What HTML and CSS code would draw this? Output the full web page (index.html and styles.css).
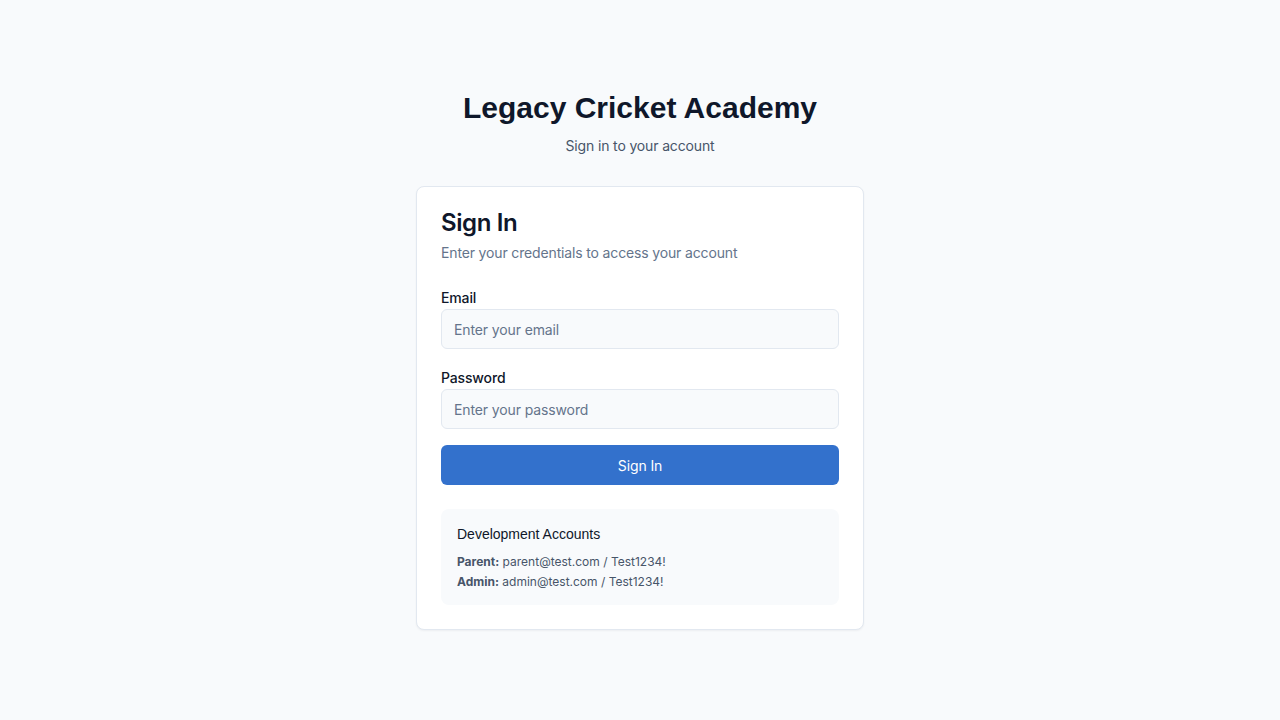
FILE: index.html
```html
<!DOCTYPE html>
<html lang="en">
<head>
<meta charset="utf-8">
<title>Legacy Cricket Academy - Sign In</title>
<link rel="stylesheet" href="styles.css">
</head>
<body>
<main class="page">
  <div class="wrap">
    <header class="brand">
      <h1 class="brand-title">Legacy Cricket Academy</h1>
      <p class="brand-sub">Sign in to your account</p>
    </header>
    <section class="card">
      <div class="card-head">
        <h2 class="card-title">Sign In</h2>
        <p class="card-desc">Enter your credentials to access your account</p>
      </div>
      <form class="form">
        <div class="field">
          <label class="label" for="email">Email</label>
          <input class="input" id="email" type="email" placeholder="Enter your email">
        </div>
        <div class="field">
          <label class="label" for="password">Password</label>
          <input class="input" id="password" type="password" placeholder="Enter your password">
        </div>
        <button class="btn" type="button">Sign In</button>
      </form>
      <div class="dev">
        <p class="dev-title">Development Accounts</p>
        <p class="dev-line"><strong>Parent:</strong> parent@test.com / Test1234!</p>
        <p class="dev-line"><strong>Admin:</strong> admin@test.com / Test1234!</p>
      </div>
    </section>
  </div>
</main>
</body>
</html>
```
FILE: styles.css
```css
* { box-sizing: border-box; }
html, body { margin: 0; padding: 0; }
body {
  background: #f8fafc;
  font-family: Inter, "Noto Sans", sans-serif;
  letter-spacing: -0.15px;
  color: #0f172a;
}
.page {
  min-height: 720px;
  display: flex;
  align-items: center;
  justify-content: center;
}
.wrap {
  width: 448px;
  display: flex;
  flex-direction: column;
}
.brand { text-align: center; }
.brand-title {
  margin: 0;
  font-family: "Liberation Sans", Arial, sans-serif;
  font-size: 30px;
  line-height: 36px;
  font-weight: 700;
  letter-spacing: 0;
  color: #0f172a;
}
.brand-sub {
  margin: 10px 0 0;
  font-size: 14px;
  line-height: 20px;
  color: #475569;
}
.card {
  margin-top: 30px;
  background: #ffffff;
  border: 1px solid #e2e8f0;
  border-radius: 8px;
  box-shadow: 0 1px 2px rgba(15, 23, 42, 0.05);
  padding: 24px;
}
.card-title {
  margin: 0;
  font-size: 24px;
  line-height: 24px;
  font-weight: 600;
  letter-spacing: -0.4px;
  color: #0f172a;
}
.card-desc {
  margin: 8px 0 0;
  font-size: 14px;
  line-height: 20px;
  color: #64748b;
}
.form {
  margin-top: 28px;
  display: flex;
  flex-direction: column;
}
.field {
  display: flex;
  flex-direction: column;
  gap: 4px;
}
.field + .field { margin-top: 22px; }
.label {
  font-size: 14px;
  line-height: 14px;
  font-weight: 500;
  color: #0f172a;
}
.input {
  height: 40px;
  width: 100%;
  border: 1px solid #e2e8f0;
  border-radius: 6px;
  background: #f8fafc;
  padding: 0 12px;
  font-family: inherit;
  font-size: 14px;
  letter-spacing: -0.12px;
  color: #0f172a;
  outline: none;
}
.input::placeholder { color: #64748b; }
.btn {
  margin-top: 16px;
  height: 40px;
  width: 100%;
  border: none;
  border-radius: 6px;
  background: #3371cc;
  color: #ffffff;
  font-family: inherit;
  font-size: 14px;
  font-weight: 400;
  letter-spacing: -0.1px;
  cursor: pointer;
}
.dev {
  margin-top: 24px;
  background: #f8fafc;
  border-radius: 8px;
  padding: 15px 16px 15px;
}
.dev-title {
  margin: 0 0 10px;
  font-family: "Liberation Sans", Arial, sans-serif;
  font-size: 14px;
  line-height: 20px;
  letter-spacing: 0;
  color: #0f172a;
}
.dev-line {
  margin: 0;
  font-size: 12px;
  line-height: 16px;
  letter-spacing: 0;
  color: #475569;
}
.dev-line + .dev-line { margin-top: 4px; }
.dev-line strong { font-weight: 700; }
```
